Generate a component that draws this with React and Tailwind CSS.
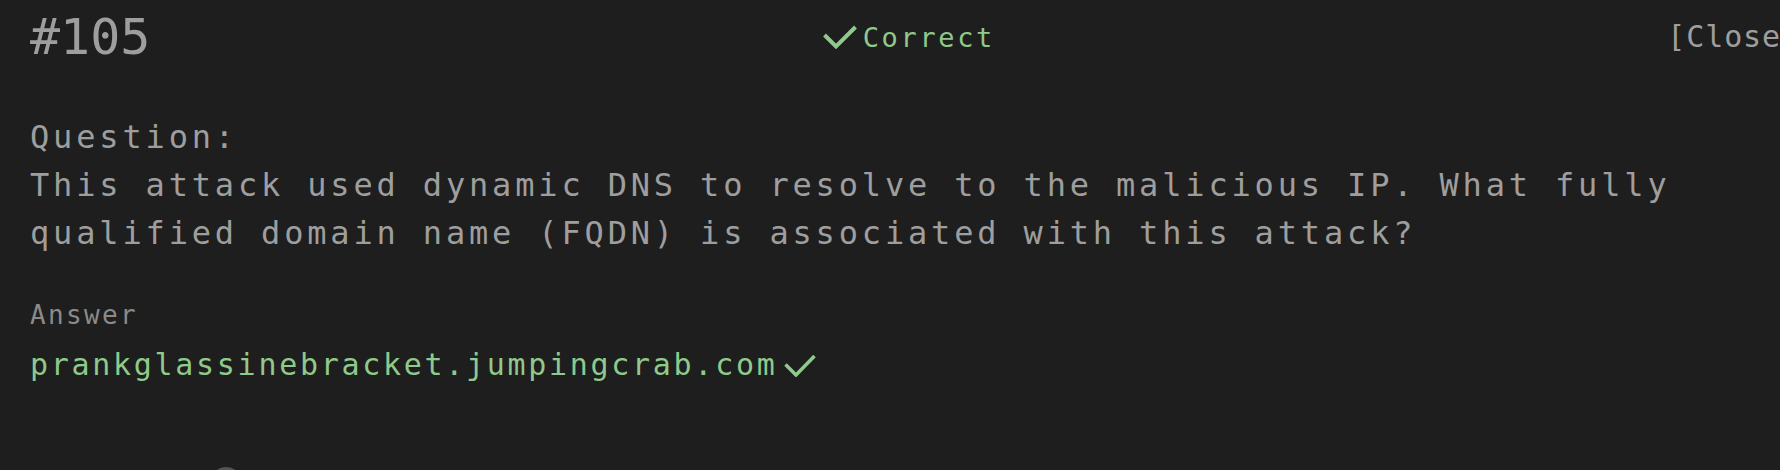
export default function App() {
  return (
    <div className="w-[1780px] h-[470px] overflow-hidden bg-[#1e1e1e] font-['DejaVu_Sans_Mono',monospace]">
      <div className="w-[1800px] pl-[30px] pt-[12px]">
        <div className="flex items-center justify-between">
          <div className="text-[50px] leading-none text-[#9e9e9e]">#105</div>
          <div className="flex items-center gap-[6px] text-[#8fc98b]">
            <svg width="34" height="25" viewBox="0 0 34 25" fill="none">
              <polyline points="1.5,10 13,21.5 32.5,2" stroke="currentColor" strokeWidth="4" />
            </svg>
            <span className="text-[27px] leading-none tracking-[2.65px]">Correct</span>
          </div>
          <div className="text-[30px] leading-none tracking-[0.9px] text-[#9e9e9e] whitespace-nowrap">[Close]</div>
        </div>
        <p className="mt-[51px] text-[32px] leading-[48px] tracking-[3.84px] text-[#9e9e9e] whitespace-nowrap">
          Question:
          <br />
          This attack used dynamic DNS to resolve to the malicious IP. What fully
          <br />
          qualified domain name (FQDN) is associated with this attack?
        </p>
        <div className="mt-[45px] text-[26px] leading-none tracking-[2.35px] text-[#8a8a8a]">Answer</div>
        <div className="mt-[22px] flex items-center gap-[7px] text-[#8fc98b]">
          <span className="text-[30px] leading-none tracking-[2.7px]">prankglassinebracket.jumpingcrab.com</span>
          <svg width="32" height="23" viewBox="0 0 32 23" fill="none">
            <polyline points="1.5,10.5 12,21 30.5,2" stroke="currentColor" strokeWidth="3.5" />
          </svg>
        </div>
        <div className="mt-[87px] ml-[180px] w-[32px] h-[32px] rounded-full bg-[#555555]" />
      </div>
    </div>
  );
}
